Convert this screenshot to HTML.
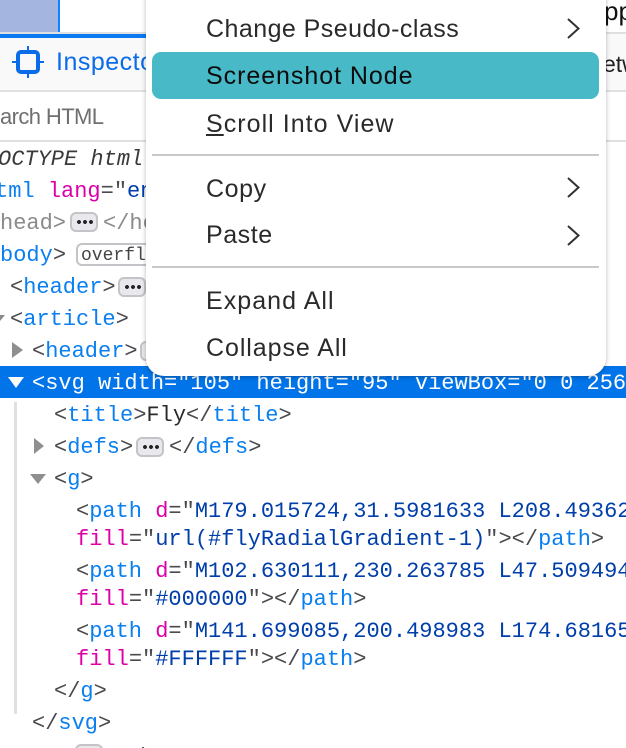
<!DOCTYPE html>
<html><head><meta charset="utf-8"><style>
html,body{margin:0;padding:0;background:#fff}
#r{position:relative;width:626px;height:748px;overflow:hidden;background:#fff}
.a{position:absolute}
.l{position:absolute;font:22px/28px "Liberation Mono",monospace;white-space:pre;color:#4a4a4f;margin-top:2px}
.t{color:#0a7ff0}.n{color:#dd00a9}.v{color:#003eaa}.g{color:#8a8a8a}.i{font-style:italic;color:#3a3a3a}
.m{position:absolute;left:206px;font:25px/30px "Liberation Sans",sans-serif;color:#2a2a2a;white-space:pre}
.b{position:absolute;box-sizing:border-box;height:20px;border:2px solid #c4c4c8;border-radius:6px;background:#e9e9ed}
.d{position:absolute;left:5px;top:6px;width:17px;height:4px;background:radial-gradient(circle at 2px 2px,#222 1.8px,transparent 2.1px) 0 0/6px 4px repeat-x}
.sep{position:absolute;left:6px;width:447px;height:2px;background:#c9c9c9}
</style></head><body><div id="r">
<div class="a" style="left:0;top:0;width:58px;height:32px;background:#a4b6df"></div>
<div class="a" style="left:58px;top:0;width:2px;height:32px;background:#0a84ff"></div>
<div class="a" style="left:0;top:32px;width:626px;height:2px;background:#e0e0e2"></div>
<div class="a" style="left:0;top:38px;width:626px;height:52px;background:#f9f9fa"></div>
<div class="a" style="left:0;top:34px;width:626px;height:4px;background:linear-gradient(90deg,#0a78f0 146px,#f9f9fa 146px)"></div>
<div class="a" style="left:0;top:90px;width:626px;height:2px;background:#e0e0e2"></div>
<div class="a" style="left:0;top:140px;width:626px;height:2px;background:#e0e0e2"></div>
<svg class="a" style="left:12px;top:46px" width="32" height="32" viewBox="0 0 32 32"><rect x="6" y="6" width="20" height="20" rx="3" fill="none" stroke="#0a6ce8" stroke-width="4"/><path d="M16 0v5M16 27v5M0 16h5M27 16h5" stroke="#0a6ce8" stroke-width="2"/></svg>
<div class="a" style="left:56px;top:47px;font:25px/30px 'Liberation Sans',sans-serif;color:#0a6ce8;white-space:pre;letter-spacing:.5px">Inspector</div>
<div class="a" style="left:0;top:102px;font:22px/30px 'Liberation Sans',sans-serif;letter-spacing:-.6px;color:#6f6f6f;white-space:pre">arch HTML</div>
<div class="a" style="left:604px;top:-4px;font:26px/30px 'Liberation Sans',sans-serif;color:#111;white-space:pre">pp</div>
<div class="a" style="left:603px;top:49px;font:23px/30px 'Liberation Sans',sans-serif;color:#222;white-space:pre">etw</div>

<div class="l i" style="left:-2px;top:144px">OCTYPE html</div>
<div class="l" style="left:-5px;top:176px"><span class="t">tml</span> <span class="n">lang</span>="<span class="v">en</span></div>
<div class="l g" style="left:0;top:208px">head&gt;</div>
<div class="b" style="left:70px;top:212px;width:28px"><div class="d"></div></div>
<div class="l g" style="left:103px;top:208px">&lt;/he</div>
<div class="l" style="left:0;top:240px"><span class="t">body</span>&gt;</div>
<div class="b" style="left:76px;top:243px;width:80px;height:23px;background:#fff"></div>
<div class="l" style="left:81px;top:240px;font-size:18px;color:#444">overfl</div>
<div class="l" style="left:10px;top:272px">&lt;<span class="t">header</span>&gt;</div>
<div class="b" style="left:118px;top:277px;width:28px"><div class="d"></div></div>
<svg class="a" style="left:0;top:315px" width="6" height="10"><path d="M0 0h5L0 6z" fill="#8a8a8a"/></svg>
<div class="l" style="left:10px;top:304px">&lt;<span class="t">article</span>&gt;</div>
<svg class="a" style="left:12px;top:342px" width="12" height="16"><path d="M0 0L11 8 0 16z" fill="#8f8f8f"/></svg>
<div class="l" style="left:32px;top:336px">&lt;<span class="t">header</span>&gt;</div>
<div class="b" style="left:140px;top:341px;width:20px"></div>

<div class="a" style="left:0;top:366px;width:626px;height:32px;background:#0074e8"></div>
<svg class="a" style="left:8px;top:377px" width="16" height="12"><path d="M0 0H16L8 11z" fill="#fff"/></svg>
<div class="l" style="left:32px;top:368px;color:#fff">&lt;svg width="105" height="95" viewBox="0 0 256</div>

<div class="a" style="left:14px;top:402px;width:3px;height:312px;background:#e0e0e2"></div>
<div class="l" style="left:54px;top:400px">&lt;<span class="t">title</span>&gt;<span style="color:#2a2a2a">Fly</span>&lt;/<span class="t">title</span>&gt;</div>
<svg class="a" style="left:34px;top:438px" width="11" height="16"><path d="M0 0L10 8 0 16z" fill="#8f8f8f"/></svg>
<div class="l" style="left:54px;top:432px">&lt;<span class="t">defs</span>&gt;</div>
<div class="b" style="left:136px;top:437px;width:28px"><div class="d"></div></div>
<div class="l" style="left:169px;top:432px">&lt;/<span class="t">defs</span>&gt;</div>
<svg class="a" style="left:30px;top:474px" width="16" height="11"><path d="M0 0H16L8 10z" fill="#8f8f8f"/></svg>
<div class="l" style="left:54px;top:464px">&lt;<span class="t">g</span>&gt;</div>
<div class="l" style="left:76px;top:496px">&lt;<span class="t">path</span> <span class="n">d</span>="<span class="v">M179.015724,31.5981633 L208.49362</span></div>
<div class="l" style="left:76px;top:524px"><span class="n">fill</span>="<span class="v">url(#flyRadialGradient-1)</span>"&gt;&lt;/<span class="t">path</span>&gt;</div>
<div class="l" style="left:76px;top:556px">&lt;<span class="t">path</span> <span class="n">d</span>="<span class="v">M102.630111,230.263785 L47.509494</span></div>
<div class="l" style="left:76px;top:584px"><span class="n">fill</span>="<span class="v">#000000</span>"&gt;&lt;/<span class="t">path</span>&gt;</div>
<div class="l" style="left:76px;top:616px">&lt;<span class="t">path</span> <span class="n">d</span>="<span class="v">M141.699085,200.498983 L174.68165</span></div>
<div class="l" style="left:76px;top:644px"><span class="n">fill</span>="<span class="v">#FFFFFF</span>"&gt;&lt;/<span class="t">path</span>&gt;</div>
<div class="l" style="left:54px;top:676px">&lt;/<span class="t">g</span>&gt;</div>
<div class="l" style="left:32px;top:708px">&lt;/<span class="t">svg</span>&gt;</div>
<div class="b" style="left:75px;top:744px;width:28px"></div>
<div class="l" style="left:10px;top:742px">&lt;</div>
<div class="l" style="left:119px;top:742px">&lt;/</div>

<div class="a" style="left:146px;top:-20px;width:460px;height:396px;background:#fff;border-radius:0 0 18px 18px;box-shadow:0 1px 5px rgba(0,0,0,.28)">
  <div class="a" style="left:6px;top:72px;width:447px;height:47px;background:#48b9c7;border-radius:9px"></div>
  <div class="sep" style="top:174px"></div>
  <div class="sep" style="top:286px"></div>
</div>
<div class="m" style="top:14px;letter-spacing:.45px">Change Pseudo-class</div>
<div class="m" style="top:61px;color:#0c0c0d;letter-spacing:.95px">Screenshot Node</div>
<div class="m" style="top:109px;letter-spacing:1.04px"><u>S</u>croll Into View</div>
<div class="m" style="top:174px;letter-spacing:.6px">Copy</div>
<div class="m" style="top:220px;letter-spacing:.55px">Paste</div>
<div class="m" style="top:286px;letter-spacing:1.05px">Expand All</div>
<div class="m" style="top:333px;letter-spacing:.93px">Collapse All</div>
<svg class="a" style="left:566px;top:18px" width="15" height="21"><path d="M2 1L12.500 10.500 2 20" fill="none" stroke="#333" stroke-width="2"/></svg>
<svg class="a" style="left:566px;top:177px" width="15" height="21"><path d="M2 1L12.500 10.500 2 20" fill="none" stroke="#333" stroke-width="2"/></svg>
<svg class="a" style="left:566px;top:225px" width="15" height="21"><path d="M2 1L12.500 10.500 2 20" fill="none" stroke="#333" stroke-width="2"/></svg>
</div></body></html>
